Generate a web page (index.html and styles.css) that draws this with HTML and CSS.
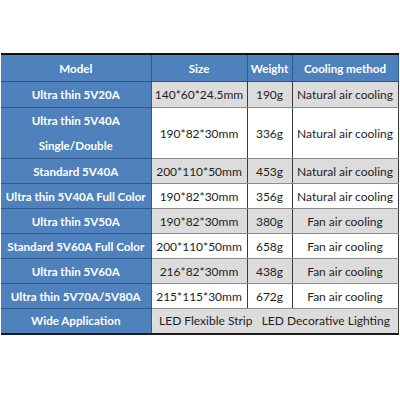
FILE: index.html
```html
<!DOCTYPE html>
<html>
<head>
<meta charset="utf-8">
<link rel="stylesheet" href="styles.css">
</head>
<body>
<table class="spec">
  <colgroup>
    <col class="c-model"><col class="c-size"><col class="c-weight"><col class="c-cool">
  </colgroup>
  <thead>
    <tr class="head">
      <th>Model</th><th>Size</th><th>Weight</th><th>Cooling method</th>
    </tr>
  </thead>
  <tbody>
    <tr class="gray r1"><th>Ultra thin 5V20A</th><td>140*60*24.5mm</td><td>190g</td><td>Natural air cooling</td></tr>
    <tr class="white r2"><th>Ultra thin 5V40A<br>Single/Double</th><td>190*82*30mm</td><td>336g</td><td>Natural air cooling</td></tr>
    <tr class="gray"><th>Standard 5V40A</th><td>200*110*50mm</td><td>453g</td><td>Natural air cooling</td></tr>
    <tr class="white"><th>Ultra thin 5V40A Full Color</th><td>190*82*30mm</td><td>356g</td><td>Natural air cooling</td></tr>
    <tr class="gray"><th>Ultra thin 5V50A</th><td>190*82*30mm</td><td>380g</td><td>Fan air cooling</td></tr>
    <tr class="white"><th>Standard 5V60A Full Color</th><td>200*110*50mm</td><td>658g</td><td>Fan air cooling</td></tr>
    <tr class="gray"><th>Ultra thin 5V60A</th><td>216*82*30mm</td><td>438g</td><td>Fan air cooling</td></tr>
    <tr class="white"><th>Ultra thin 5V70A/5V80A</th><td>215*115*30mm</td><td>672g</td><td>Fan air cooling</td></tr>
    <tr class="gray last"><th>Wide Application</th><td colspan="3" class="wide">LED Flexible Strip&nbsp;&nbsp;&nbsp;LED Decorative Lighting</td></tr>
  </tbody>
</table>
</body>
</html>
```

FILE: styles.css
```css
html, body {
  margin: 0;
  padding: 0;
  background: #ffffff;
}
body {
  padding: 53px 0 0 1px;
  font-family: Lato, "Open Sans", sans-serif;
}
.spec {
  border-collapse: collapse;
  table-layout: fixed;
  width: 397px;
  border-top: 2px solid #111;
  border-bottom: 2px solid #1a1a1a;
  border-right: 1px solid #9a9a9a;
}
.c-model { width: 150px; }
.c-size { width: 96px; }
.c-weight { width: 45px; }
.c-cool { width: 106px; }
.spec th, .spec td {
  padding: 0;
  text-align: center;
  white-space: nowrap;
}
.spec th {
  background: #4f81bd;
  color: #ffffff;
  font-weight: bold;
  font-size: 11.6px;
  border-bottom: 1px solid #2f5a8c;
  border-right: 1px solid #2f5a8c;
}
.head th {
  height: 26px;
  font-size: 11.6px;
  border-right: 1px solid #2d5b94;
  border-bottom: 1px solid #2d4f78;
}
.spec td {
  color: #1e1e1e;
  font-size: 12px;
  border-left: 1px solid #3a3a3a;
  border-right: 1px solid #3a3a3a;
  border-top: 1px solid #8c8c8c;
  border-bottom: 1px solid #8c8c8c;
}
.gray td { background: #dcdcdc; }
.white td { background: #ffffff; }
.spec tbody tr { height: 25px; }
.spec tbody tr.r1 { height: 26px; }
.spec tbody tr.r2 { height: 50px; }
.r2 th { line-height: 25px; }
.last th, .last td { border-bottom: none; }
.wide { text-align: center; padding-left: 2px; }
```
